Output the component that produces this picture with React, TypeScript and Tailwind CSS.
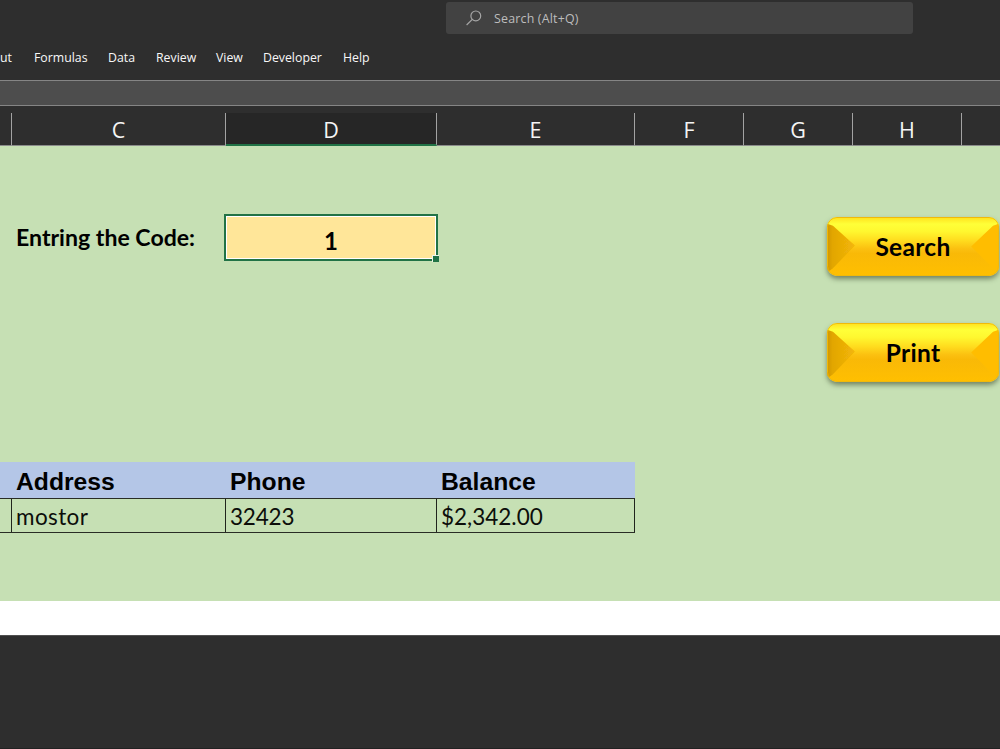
import clsx from 'clsx';

const tabs = [
  { name: 'Formulas', width: 'w-[74px]' },
  { name: 'Data', width: 'w-12' },
  { name: 'Review', width: 'w-[60px]' },
  { name: 'View', width: 'w-[47px]' },
  { name: 'Developer', width: 'w-20' },
  { name: 'Help', width: 'w-12' },
];

const columns = [
  { name: '', width: 'w-3' },
  { name: 'C', width: 'w-[214px]' },
  { name: 'D', width: 'w-[211px]', selected: true },
  { name: 'E', width: 'w-[198px]' },
  { name: 'F', width: 'w-[109px]' },
  { name: 'G', width: 'w-[109px]' },
  { name: 'H', width: 'w-[109px]' },
];

const record = [
  { label: '', value: '', width: 'w-3' },
  { label: 'Address', value: 'mostor', width: 'w-[214px]', tracking: 'tracking-[0.4px]' },
  { label: 'Phone', value: '32423', width: 'w-[211px]', tracking: 'tracking-[-0.2px]' },
  { label: 'Balance', value: '$2,342.00', width: 'w-[198px]', tracking: 'tracking-[0px]' },
];

const TitleBar = () => (
  <header className="flex h-20 flex-col bg-[#2e2e2e]">
    <div className="mt-0.5 ml-[446px] flex h-8 w-[467px] items-center rounded-[3px] bg-[#424242] pl-5">
      <svg
        className="h-4 w-4"
        viewBox="0 0 16 16"
        fill="none"
        stroke="#a6a6a6"
        strokeWidth="1.2"
      >
        <circle cx="9.8" cy="5.9" r="4.9" />
        <path d="M6.3 9.4 0.6 15" />
      </svg>
      <span className="ml-3 pt-0.5 font-['Open_Sans',sans-serif] text-[12.4px] tracking-[0.2px] text-[#bdbdbd]">
        Search (Alt+Q)
      </span>
    </div>
    <nav className="mt-[15px] flex h-[18px] items-center font-['Open_Sans',sans-serif] text-[12.3px] whitespace-nowrap text-[#f8f8f8]">
      <span className="w-[34px]">ut</span>
      {tabs.map((tab) => (
        <span key={tab.name} className={tab.width}>
          {tab.name}
        </span>
      ))}
    </nav>
  </header>
);

const ColumnHeaders = () => (
  <div className="flex h-10 items-end bg-[#2e2e2e]">
    {columns.map((column) => (
      <div
        key={column.name}
        className={clsx(
          "flex h-[33px] items-center justify-center border-r border-b border-r-[#a3a3a3] pt-[3px] font-['Open_Sans',sans-serif] text-[21.5px] text-[#f5f5f5]",
          column.width,
          column.selected ? 'border-b-2 border-b-[#217346] bg-[#262626]' : 'border-b-[#8b8b8b]'
        )}
      >
        {column.name}
      </div>
    ))}
    <div className="h-[33px] grow border-b border-[#8b8b8b]" />
  </div>
);

const BevelButton = ({ id, label }: { id: string; label: string }) => (
  <button className="relative h-[59px] w-[172px] rounded-[10px] pt-0.5 shadow-[0_3px_5px_rgba(50,60,35,0.55)]">
    <svg
      className="absolute inset-0 h-full w-full"
      viewBox="0 0 173 60"
      preserveAspectRatio="none"
    >
      <defs>
        <clipPath id={`${id}-clip`}>
          <rect width="173" height="60" rx="10" />
        </clipPath>
        <linearGradient id={`${id}-face`} x1="0" y1="0" x2="0" y2="1">
          <stop offset="0" stopColor="#ffe01c" />
          <stop offset="0.12" stopColor="#ffff38" />
          <stop offset="0.24" stopColor="#fff830" />
          <stop offset="0.4" stopColor="#ffdc1e" />
          <stop offset="0.54" stopColor="#fbc010" />
          <stop offset="0.62" stopColor="#f9b907" />
          <stop offset="1" stopColor="#ffbf00" />
        </linearGradient>
        <linearGradient id={`${id}-left`} x1="0" y1="0" x2="1" y2="0">
          <stop offset="0" stopColor="#c98f00" />
          <stop offset="0.25" stopColor="#e2a604" />
          <stop offset="1" stopColor="#f3b608" />
        </linearGradient>
        <filter id={`${id}-soft`}>
          <feGaussianBlur stdDeviation="0.7" />
        </filter>
      </defs>
      <g clipPath={`url(#${id}-clip)`}>
        <rect width="173" height="60" fill={`url(#${id}-face)`} />
        <path
          d="M-2 6 6 9 28 29 6 52-2 58Z"
          fill={`url(#${id}-left)`}
          filter={`url(#${id}-soft)`}
        />
        <path
          d="M175 6 167 9 145 30 167 52 175 58Z"
          fill="#ffbd03"
          filter={`url(#${id}-soft)`}
        />
        <rect
          x="0.5"
          y="0.5"
          width="172"
          height="59"
          rx="9.5"
          fill="none"
          stroke="#f0b90b"
          strokeWidth="1"
        />
        <path
          d="M8 58.4H165"
          stroke="#ffdc25"
          strokeWidth="1.5"
          filter={`url(#${id}-soft)`}
        />
      </g>
    </svg>
    <span className="relative font-['Lato',sans-serif] text-[24.5px] font-bold tracking-[0.3px] text-black">
      {label}
    </span>
  </button>
);

const Sheet = () => (
  <main className="flex h-[455px] bg-[#c6e0b4]">
    <div className="w-[635px] shrink-0">
      <div className="flex pt-[68px]">
        <div className="flex h-[47px] w-56 items-center pl-4 font-['Lato',sans-serif] text-[23.1px] font-bold whitespace-nowrap text-black">
          Entring the Code:
        </div>
        <div className="relative flex h-[47px] w-[214px] items-center justify-center border-2 border-[#217346] bg-[#ffe699] pt-1.5 font-['Lato',sans-serif] text-[24px] font-bold text-black ring-1 ring-white ring-inset">
          1
          <span className="absolute -right-[3px] -bottom-[3px] h-[7px] w-[7px] border-t border-l border-[#eef5e8] bg-[#217346]" />
        </div>
      </div>
      <div className="mt-[201px] flex h-9 bg-[#b4c6e7]">
        {record.map((field) => (
          <div
            key={field.label}
            className={clsx(
              "flex items-center pt-1 pl-1 font-['Liberation_Sans',sans-serif] text-[24.7px] font-bold text-black",
              field.width
            )}
          >
            {field.label}
          </div>
        ))}
      </div>
      <div className="flex h-[35px] border-y border-[#292d25]">
        {record.map((field) => (
          <div
            key={field.label}
            className={clsx(
              "flex items-center border-r border-[#20241d] pt-0.5 pl-1 font-['Lato',sans-serif] text-[22.5px] text-[#0c0e0a]",
              field.width,
              field.tracking
            )}
          >
            {field.value}
          </div>
        ))}
      </div>
    </div>
    <div className="ml-48 flex flex-col gap-[47px] pt-[71px]">
      <BevelButton id="search" label="Search" />
      <BevelButton id="print" label="Print" />
    </div>
  </main>
);

const App = () => (
  <div className="flex h-[749px] w-[1000px] flex-col overflow-hidden bg-[#2e2e2e]">
    <TitleBar />
    <div className="h-[26px] border-y border-[#858585] bg-[#4d4d4d]" />
    <ColumnHeaders />
    <Sheet />
    <div className="h-[34px] bg-white" />
    <div className="grow border-t border-b border-t-[#505050] border-b-[#222222]" />
  </div>
);

export default App;
